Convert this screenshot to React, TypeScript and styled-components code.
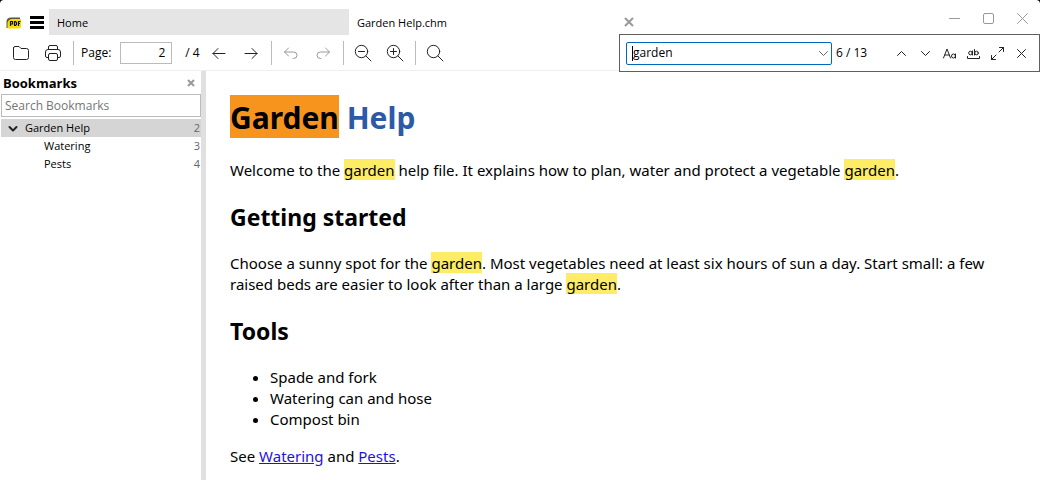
import React from "react";
import styled, { createGlobalStyle } from "styled-components";

const Global = createGlobalStyle`
  * { box-sizing: border-box; }
  html { background: #000; }
  body { margin: 0; font-family: "Open Sans", "Noto Sans", sans-serif; font-size: 12px; line-height: 18px; color: #000; }
  button, input { font: inherit; color: inherit; }
`;

const Window = styled.div`
  position: relative;
  display: flex;
  flex-direction: column;
  min-height: 100vh;
  background: #fff;
  border-radius: 4px 4px 0 0;
`;

const TitleBar = styled.header`
  display: flex;
  align-items: flex-end;
  height: 35px;
`;

const IconButton = styled.button<{ $w?: number; $h?: number; $color?: string }>`
  flex: none;
  display: flex;
  align-items: center;
  justify-content: center;
  width: ${(p) => p.$w ?? 32}px;
  height: ${(p) => p.$h ?? 24}px;
  padding: 0;
  border: 0;
  background: none;
  color: ${(p) => p.$color ?? "#222"};
`;

const AppIcon = styled.svg`
  flex: none;
  margin: 0 7px 4px 6px;
`;

const Tabs = styled.nav`
  flex: 1;
  display: flex;
  min-width: 0;
  margin-left: 4px;
`;

const Tab = styled.div<{ $active?: boolean }>`
  display: flex;
  align-items: center;
  justify-content: space-between;
  flex: 0 0 300px;
  height: 26px;
  padding-left: 8px;
  background: ${(p) => (p.$active ? "#fff" : "#e5e5e5")};
`;

const TabLabel = styled.button`
  padding: 2px 0 0;
  border: 0;
  background: none;
  font-size: 11px;
`;

const WindowControls = styled.div`
  display: flex;
  align-self: flex-start;
  padding: 6px 1px 0 0;
`;

const Toolbar = styled.div`
  display: flex;
  align-items: center;
  height: 36px;
  padding-left: 5px;
  border-bottom: 1px solid #f0f0f0;
`;

const Separator = styled.span`
  width: 1px;
  height: 24px;
  margin: 0 3px 0 4px;
  background: #bbb;
`;

const PageLabel = styled.label`
  display: flex;
  align-items: center;
  gap: 9px;
  padding-left: 4px;
`;

const PageInput = styled.input`
  width: 52px;
  height: 22px;
  padding: 0 6px;
  border: 1px solid #bbb;
  text-align: right;
`;

const PageTotal = styled.span`
  width: 31px;
  padding-left: 13px;
  white-space: nowrap;
`;

const FindBar = styled.form`
  position: absolute;
  top: 34px;
  right: 0;
  display: flex;
  align-items: center;
  width: 421px;
  height: 38px;
  padding-left: 6px;
  border: 1px solid #5f5f5f;
  background: #fff;
`;

const FindBox = styled.div`
  display: flex;
  align-items: center;
  width: 206px;
  height: 23px;
  border: 1px solid #0067c0;
  border-radius: 2px;
  background: #fff;
`;

const Caret = styled.span`
  width: 1px;
  height: 15px;
  margin-left: 5px;
  background: #000;
`;

const FindInput = styled.input`
  flex: 1;
  min-width: 0;
  padding: 0;
  border: 0;
  outline: 0;
  background: none;
`;

const MatchCount = styled.output`
  flex: 1;
  padding-left: 4px;
  white-space: nowrap;
`;

const FindButtons = styled.div`
  display: flex;
  padding-right: 6px;
`;

const Main = styled.div`
  flex: 1;
  display: flex;
`;

const Sidebar = styled.aside`
  flex: none;
  width: 206px;
  border-right: 5px solid #e0e0e0;
`;

const SidebarHeader = styled.div`
  display: flex;
  align-items: center;
  justify-content: space-between;
  height: 23px;
  padding: 0 2px 0 3px;
`;

const SidebarTitle = styled.h2`
  margin: 0;
  font-size: 13px;
  font-weight: 700;
`;

const SearchInput = styled.input`
  display: block;
  width: 200px;
  height: 23px;
  margin: 0 0 2px 1px;
  padding: 0 3px;
  border: 1px solid #bbb;
  &::placeholder { color: #757575; opacity: 1; }
`;

const Tree = styled.ul`
  margin: 0;
  padding: 0 0 0 1px;
  list-style: none;
  font-size: 11px;
`;

const TreeRow = styled.li<{ $selected?: boolean; $child?: boolean }>`
  display: flex;
  align-items: center;
  height: 18px;
  padding-left: ${(p) => (p.$child ? 43 : 0)}px;
  padding-right: 1px;
  background: ${(p) => (p.$selected ? "#d5d5d5" : "#fff")};
`;

const TreeLabel = styled.span`
  flex: 1;
`;

const TreePage = styled.span`
  color: #666;
`;

const Article = styled.main`
  flex: 1;
  min-width: 0;
  padding: 25px 24px 12px;
  font-family: "Noto Sans", "Open Sans", sans-serif;
  font-size: 15px;
  line-height: 21px;

  h1 { margin: 0 0 21px; font-size: 30px; line-height: 43px; color: #2c5aa6; }
  h2 { margin: 20px 0; font-size: 23px; line-height: 32px; }
  p { margin: 0 0 16px; }
  ul { margin: 0 0 16px; padding-left: 40px; }
  a { color: #1f12dc; }
`;

const Hit = styled.mark<{ $current?: boolean }>`
  padding-top: ${(p) => (p.$current ? 2 : 1)}px;
  background: ${(p) => (p.$current ? "#f7941d" : "#fcec66")};
  color: #000;
`;

function Icon({ children, size = 18, width = 1 }: { children: React.ReactNode; size?: number; width?: number }) {
  return (
    <svg width={size} height={size} viewBox={`0 0 ${size} ${size}`} fill="none" stroke="currentColor" strokeWidth={width} strokeLinecap="round" strokeLinejoin="round" aria-hidden="true">
      {children}
    </svg>
  );
}

const Lens = () => (
  <>
    <circle cx="7.5" cy="7.5" r="6.2" />
    <path d="M12 12l5 5" />
  </>
);

export default function App() {
  return (
    <>
      <Global />
      <Window>
        <TitleBar>
          <AppIcon width="16" height="16" viewBox="0 0 16 16" role="img" aria-label="PDF">
            <path d="M0.500 12V6Q1 2.500 5 2.500H14V11Q14 13 12 13H0.500Z" fill="#55583f" />
            <path d="M1.500 13V8Q2.500 4 6 4H15V11.500Q15 13.500 13 13.500H1.500Z" fill="#f5df00" />
            <path d="M4.500 11V6.500H6.500V9H4.500M8.500 6.500V10.500H9.500L10.500 9.500V7.500L9.500 6.500ZM12.500 11V6.500H14.500M12.500 8.500H14" fill="none" stroke="#111" strokeWidth="1.200" />
          </AppIcon>
          <IconButton $w={16} $h={24} $color="#000" aria-label="Menu">
            <Icon size={14} width={3}>
              <path strokeLinecap="butt" d="M0 1.500H14M0 6.500H14M0 11.500H14" />
            </Icon>
          </IconButton>
          <Tabs>
            <Tab><TabLabel>Home</TabLabel></Tab>
            <Tab $active>
              <TabLabel>Garden Help.chm</TabLabel>
              <IconButton $w={41} $h={26} $color="#999" aria-label="Close tab">
                <Icon size={10} width={2}><path d="M1 1l8 8M9 1l-8 8" strokeLinecap="butt" /></Icon>
              </IconButton>
            </Tab>
          </Tabs>
          <WindowControls>
            <IconButton $w={34} $color="#999" aria-label="Minimize"><Icon size={11}><path d="M0.5 5.500h10" /></Icon></IconButton>
            <IconButton $w={34} $color="#999" aria-label="Maximize"><Icon size={11}><rect x="0.5" y="0.5" width="10" height="10" rx="1.500" /></Icon></IconButton>
            <IconButton $w={34} $color="#999" aria-label="Close"><Icon size={11}><path d="M0.5 0.500l10 10M10.500 0.500l-10 10" /></Icon></IconButton>
          </WindowControls>
        </TitleBar>

        <Toolbar>
          <IconButton aria-label="Open"><Icon><path d="M1.500 4V13.500Q1.500 15.500 3.500 15.500H14.500Q16.500 15.500 16.500 13.500V6.500Q16.500 4.500 14.500 4.500H9L7 2.500H3Q1.500 2.500 1.500 4Z" /></Icon></IconButton>
          <IconButton aria-label="Print">
            <Icon>
              <path d="M4.500 5.500V3Q4.500 1.500 6 1.500H12Q13.500 1.500 13.500 3V5.500M4.500 13.500H3Q1.500 13.500 1.500 12V8Q1.500 5.500 4 5.500H14Q16.500 5.500 16.500 8V12Q16.500 13.500 15 13.500H13.500" />
              <rect x="4.500" y="9.500" width="9" height="7" rx="1.500" />
            </Icon>
          </IconButton>
          <Separator />
          <PageLabel>Page:<PageInput defaultValue="2" /></PageLabel>
          <PageTotal>/ 4</PageTotal>
          <IconButton aria-label="Previous page"><Icon><path d="M15 9.500H3M8 4.500L3 9.500L8 14.500" /></Icon></IconButton>
          <IconButton aria-label="Next page"><Icon><path d="M3 9.500H15M10 4.500L15 9.500L10 14.500" /></Icon></IconButton>
          <Separator />
          <IconButton $color="#999" aria-label="Back"><Icon><path d="M6.500 4L2.500 8L6.500 12M2.500 8H11.500Q15 8 15 11.300Q15 14.500 11.500 14.500H11" /></Icon></IconButton>
          <IconButton $color="#999" aria-label="Forward"><Icon><path d="M11.500 4L15.500 8L11.500 12M15.500 8H6.500Q3 8 3 11.300Q3 14.500 6.500 14.500H7" /></Icon></IconButton>
          <Separator />
          <IconButton aria-label="Zoom out"><Icon><Lens /><path d="M4.500 7.500h6" /></Icon></IconButton>
          <IconButton aria-label="Zoom in"><Icon><Lens /><path d="M4.500 7.500h6M7.500 4.500v6" /></Icon></IconButton>
          <Separator />
          <IconButton aria-label="Find"><Icon><Lens /></Icon></IconButton>
        </Toolbar>

        <Main>
          <Sidebar>
            <SidebarHeader>
              <SidebarTitle>Bookmarks</SidebarTitle>
              <IconButton $w={16} $h={16} $color="#999" aria-label="Close bookmarks">
                <Icon size={8} width={2}><path d="M1 1l6 6M7 1l-6 6" strokeLinecap="butt" /></Icon>
              </IconButton>
            </SidebarHeader>
            <SearchInput aria-label="Search Bookmarks" placeholder="Search Bookmarks" />
            <Tree>
              <TreeRow $selected>
                <IconButton $w={24} $h={18} aria-label="Collapse"><Icon size={10} width={2}><path d="M1.500 4l3.500 3.500L8.500 4" /></Icon></IconButton>
                <TreeLabel>Garden Help</TreeLabel>
                <TreePage>2</TreePage>
              </TreeRow>
              <TreeRow $child><TreeLabel>Watering</TreeLabel><TreePage>3</TreePage></TreeRow>
              <TreeRow $child><TreeLabel>Pests</TreeLabel><TreePage>4</TreePage></TreeRow>
            </Tree>
          </Sidebar>

          <Article>
            <h1><Hit $current>Garden</Hit> Help</h1>
            <p>Welcome to the <Hit>garden</Hit> help file. It explains how to plan, water and protect a vegetable <Hit>garden</Hit>.</p>
            <h2>Getting started</h2>
            <p>Choose a sunny spot for the <Hit>garden</Hit>. Most vegetables need at least six hours of sun a day. Start small: a few raised beds are easier to look after than a large <Hit>garden</Hit>.</p>
            <h2>Tools</h2>
            <ul>
              <li>Spade and fork</li>
              <li>Watering can and hose</li>
              <li>Compost bin</li>
            </ul>
            <p>See <a href="#watering">Watering</a> and <a href="#pests">Pests</a>.</p>
          </Article>
        </Main>

        <FindBar>
          <FindBox>
            <Caret />
            <FindInput aria-label="Find" defaultValue="garden" />
            <IconButton type="button" $w={16} $h={20} $color="#666" aria-label="Recent searches"><Icon size={9}><path d="M0.500 2.500l4 4l4-4" /></Icon></IconButton>
          </FindBox>
          <MatchCount>6 / 13</MatchCount>
          <FindButtons>
            <IconButton type="button" $w={24} aria-label="Find previous"><Icon size={9}><path d="M0.500 6.500l4-4l4 4" /></Icon></IconButton>
            <IconButton type="button" $w={24} aria-label="Find next"><Icon size={9}><path d="M0.500 2.500l4 4l4-4" /></Icon></IconButton>
            <IconButton type="button" $w={24} aria-label="Match case">
              <Icon size={15}><path d="M1.500 12L5 3L8.500 12M2.800 9H7.200" /><circle cx="11.500" cy="10" r="2" /><path d="M13.500 8V12" /></Icon>
            </IconButton>
            <IconButton type="button" $w={24} aria-label="Match whole word">
              <Icon size={15}><circle cx="4.500" cy="7" r="1.800" /><path d="M6.500 5V9M8.500 3.500V9M1.500 10.500V12.500H13.500V10.500" /><circle cx="10.500" cy="7" r="1.800" /></Icon>
            </IconButton>
            <IconButton type="button" $w={24} aria-label="Expand">
              <Icon size={13}><path d="M8.500 0.500H12.500V4.500M12.500 0.500L8 5M0.500 8.500V12.500H4.500M0.500 12.500L5 8" /></Icon>
            </IconButton>
            <IconButton type="button" $w={24} aria-label="Close find bar"><Icon size={9}><path d="M0.500 0.500l8 8M8.500 0.500l-8 8" /></Icon></IconButton>
          </FindButtons>
        </FindBar>
      </Window>
    </>
  );
}
